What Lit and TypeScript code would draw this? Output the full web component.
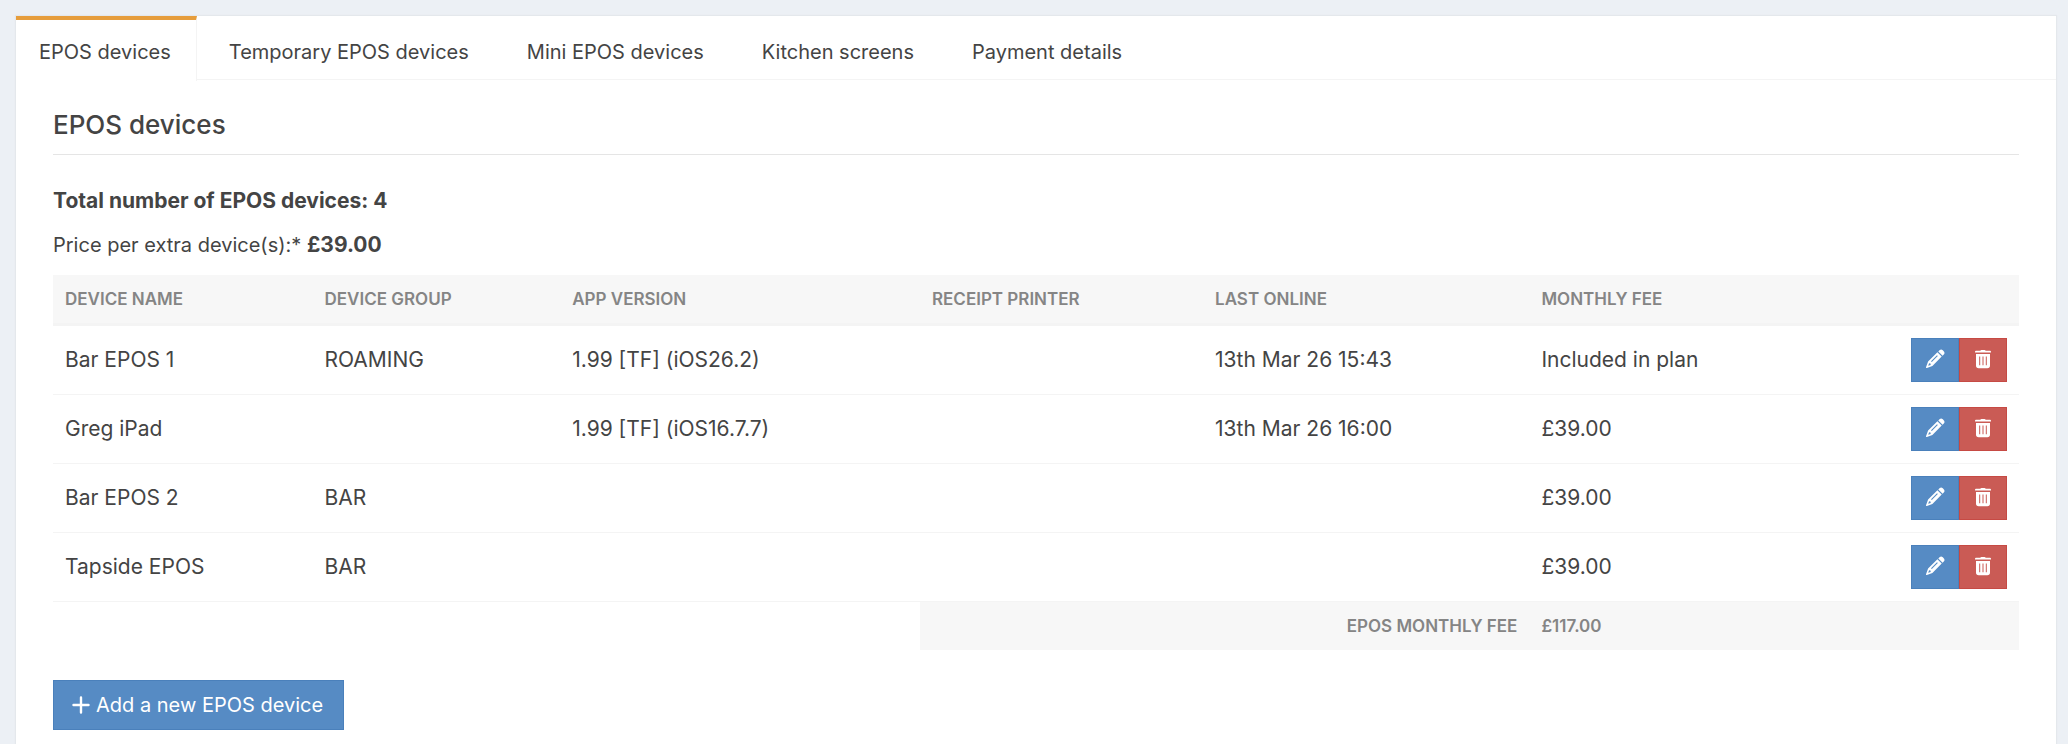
import { LitElement, html, css, svg } from "lit";
import { customElement, state } from "lit/decorators.js";

interface Device {
  name: string;
  group: string;
  version: string;
  printer: string;
  lastOnline: string;
  fee: string;
}

const TABS = ["EPOS devices", "Temporary EPOS devices", "Mini EPOS devices", "Kitchen screens", "Payment details"];

const DEVICES: Device[] = [
  { name: "Bar EPOS 1", group: "ROAMING", version: "1.99 [TF] (iOS26.2)", printer: "", lastOnline: "13th Mar 26 15:43", fee: "Included in plan" },
  { name: "Greg iPad", group: "", version: "1.99 [TF] (iOS16.7.7)", printer: "", lastOnline: "13th Mar 26 16:00", fee: "£39.00" },
  { name: "Bar EPOS 2", group: "BAR", version: "", printer: "", lastOnline: "", fee: "£39.00" },
  { name: "Tapside EPOS", group: "BAR", version: "", printer: "", lastOnline: "", fee: "£39.00" },
];

const pencil = svg`<svg class="icon" viewBox="0 0 20 20" aria-hidden="true">
  <path fill="currentColor" fill-rule="evenodd" d="M13.3 2.4 14.8 1Q16.3-.1 17.8 1.3L18.7 2.2Q20.1 3.7 19 5.2L17.6 6.7ZM12.4 3.3 16.7 7.6 7.4 16.9 1.9 18.9Q.8 19.2 1.1 18L3.1 12.6ZM12 6.2 6 12.2 6.8 13 12.8 7ZM4.1 14.3 3.2 16.8 5.7 15.9 5.5 14.5Z"/>
</svg>`;

const trash = svg`<svg class="icon" viewBox="0 0 20 20" aria-hidden="true">
  <path fill="currentColor" fill-rule="evenodd" d="M7.3 1.7Q7.6.9 8.5.9H11.5Q12.4.9 12.7 1.7H17Q18 1.8 18 2.9V3.6H2V2.9Q2 1.8 3 1.7ZM3 4.9H17V16.5Q17 19.2 14.3 19.2H5.7Q3 19.2 3 16.5ZM6.2 7.4V16.3H7.2V7.4ZM9.5 7.4V16.3H10.5V7.4ZM12.8 7.4V16.3H13.8V7.4Z"/>
</svg>`;

const plus = svg`<svg class="plus" viewBox="0 0 18 18" aria-hidden="true">
  <path d="M9 1.5V16.5M1.5 9H16.5" fill="none" stroke="currentColor" stroke-width="2.4" stroke-linecap="round"/>
</svg>`;

@customElement("app-root")
export class AppRoot extends LitElement {
  @state() private active = 0;

  static styles = css`
    :host {
      display: block;
      box-sizing: border-box;
      min-height: 100vh;
      padding: 16px 12px 0 16px;
      background: #ecf0f5;
      color: #444;
      font: 400 20px/28px Inter, "Liberation Sans", sans-serif;
    }
    * {
      box-sizing: border-box;
    }
    .panel {
      min-height: calc(100vh - 16px);
      background: #fff;
      box-shadow: 0 0 1px 1px #e4e8ec;
    }
    .tabs {
      display: flex;
      height: 64px;
      border-bottom: 1px solid #f4f4f4;
    }
    .tab {
      height: 65px;
      margin-right: 9px;
      padding: 2px 25px 0 23px;
      border: 0;
      border-top: 4px solid transparent;
      border-right: 1px solid transparent;
      background: transparent;
      color: inherit;
      font: inherit;
      cursor: pointer;
    }
    .tab.active {
      border-top-color: #e69d3c;
      border-right-color: #f4f4f4;
      background: #fff;
    }
    .content {
      padding: 29px 37px 14px;
    }
    h2 {
      margin: 0 0 32px;
      padding-bottom: 13px;
      border-bottom: 1px solid #e5e5e5;
      font-size: 26px;
      line-height: 32px;
      font-weight: 500;
    }
    p {
      margin: 0 0 16px;
    }
    strong {
      font-size: 21px;
      font-weight: 700;
    }
    table {
      width: 100%;
      border-collapse: separate;
      border-spacing: 0;
      table-layout: fixed;
    }
    .c1 { width: 13.2%; }
    .c2 { width: 12.6%; }
    .c3 { width: 18.3%; }
    .c4 { width: 14.4%; }
    .c5 { width: 16.6%; }
    th, td {
      padding: 0 12px;
      text-align: left;
      vertical-align: middle;
    }
    th, .total {
      background: #f7f7f7;
      color: #858585;
      font-size: 17px;
      line-height: 24px;
      font-weight: 600;
    }
    th {
      height: 51px;
      border-bottom: 3px solid #f4f4f4;
    }
    tbody td {
      height: 69px;
      border-bottom: 1px solid #f4f4f4;
      font-size: 21px;
    }
    tfoot td {
      height: 48px;
    }
    .total.label {
      text-align: right;
    }
    .actions {
      display: flex;
      justify-content: flex-end;
    }
    .action {
      display: grid;
      place-items: center;
      width: 48px;
      height: 44px;
      padding: 0 0 2px;
      color: #fff;
      cursor: pointer;
    }
    .edit, .add {
      border: 1px solid #4a80bb;
      background: #568bc4;
    }
    .delete {
      border: 1px solid #c64a44;
      background: #ca5b55;
    }
    .icon {
      width: 20px;
      height: 20px;
    }
    .plus {
      width: 18px;
      height: 18px;
    }
    .add {
      display: inline-flex;
      align-items: center;
      gap: 6px;
      height: 50px;
      margin-top: 30px;
      padding: 0 20px 0 18px;
      color: #fff;
      font: inherit;
      cursor: pointer;
    }
  `;

  render() {
    return html`
      <main class="panel">
        <div class="tabs" role="tablist">
          ${TABS.map(
            (label, i) => html`<button
              class="tab ${i === this.active ? "active" : ""}"
              role="tab"
              aria-selected=${i === this.active ? "true" : "false"}
              @click=${() => (this.active = i)}
            >${label}</button>`
          )}
        </div>
        <section class="content">
          <h2>EPOS devices</h2>
          <p><strong>Total number of EPOS devices: 4</strong></p>
          <p>Price per extra device(s):* <strong>£39.00</strong></p>
          <table>
            <colgroup>
              <col class="c1" /><col class="c2" /><col class="c3" /><col class="c4" /><col class="c5" /><col /><col />
            </colgroup>
            <thead>
              <tr>
                <th scope="col">DEVICE NAME</th>
                <th scope="col">DEVICE GROUP</th>
                <th scope="col">APP VERSION</th>
                <th scope="col">RECEIPT PRINTER</th>
                <th scope="col">LAST ONLINE</th>
                <th scope="col">MONTHLY FEE</th>
                <th></th>
              </tr>
            </thead>
            <tbody>
              ${DEVICES.map(
                (d) => html`<tr>
                  <td>${d.name}</td>
                  <td>${d.group}</td>
                  <td>${d.version}</td>
                  <td>${d.printer}</td>
                  <td>${d.lastOnline}</td>
                  <td>${d.fee}</td>
                  <td>
                    <div class="actions">
                      <button class="action edit" aria-label="Edit ${d.name}">${pencil}</button>
                      <button class="action delete" aria-label="Delete ${d.name}">${trash}</button>
                    </div>
                  </td>
                </tr>`
              )}
            </tbody>
            <tfoot>
              <tr>
                <td colspan="3"></td>
                <td class="total label" colspan="2">EPOS MONTHLY FEE</td>
                <td class="total" colspan="2">£117.00</td>
              </tr>
            </tfoot>
          </table>
          <button class="add">${plus}<span>Add a new EPOS device</span></button>
        </section>
      </main>
    `;
  }
}
